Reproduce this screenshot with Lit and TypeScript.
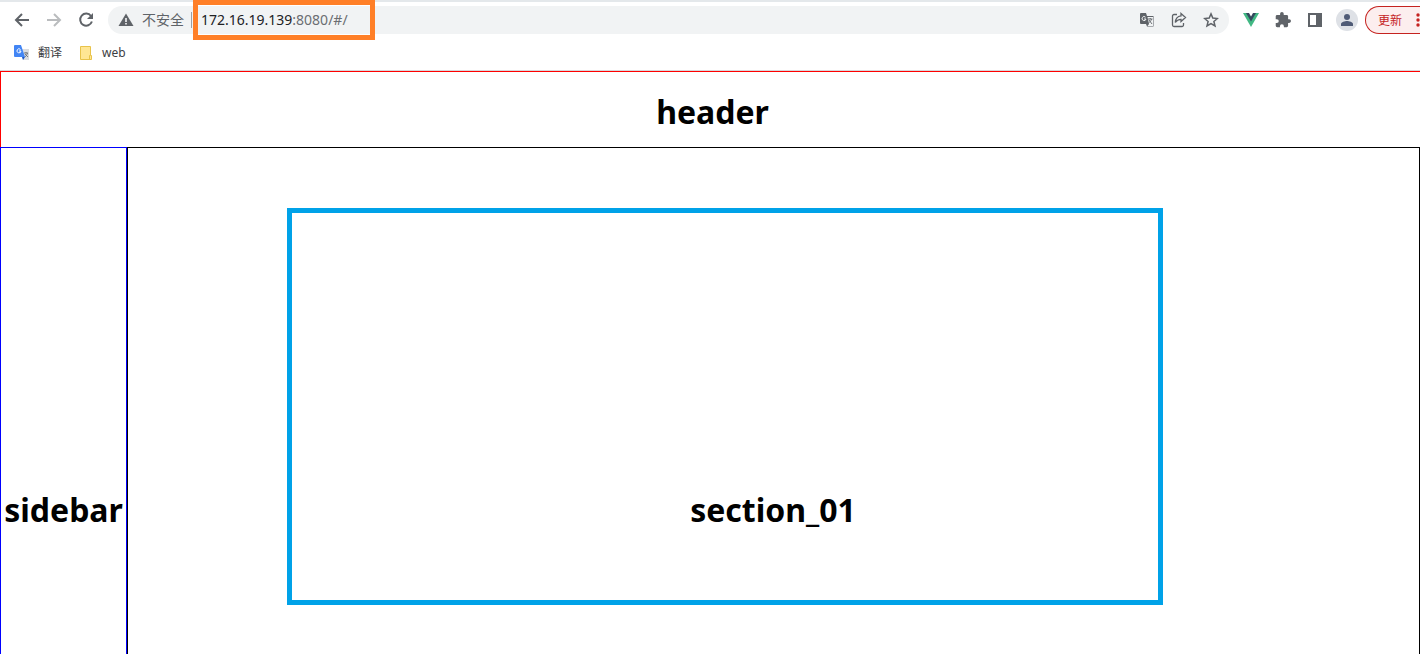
import { LitElement, html, css } from "lit";
import { customElement } from "lit/decorators.js";

@customElement("browser-chrome")
class BrowserChrome extends LitElement {
  static styles = css`
    :host { display: block; height: 70px; border-bottom: 1px solid #d5d8db; background: #fff;
      font-family: "Noto Sans", "Noto Sans CJK SC", sans-serif; color: #3c4043; overflow: hidden; }
    .strip { height: 2px; background: #e4e8eb; }
    .bar { display: flex; align-items: center; height: 36px; }
    button { border: 0; background: none; padding: 0; margin: 0; font: inherit; color: #5f6368; display: grid; place-items: center; flex: none; }
    svg { display: block; }
    .nav { display: flex; gap: 16px; padding: 0 14px; }
    .nav .off { color: #babcbe; }
    .omni { flex: 1; min-width: 0; height: 28px; border-radius: 14px; background: #f1f3f4; display: flex; align-items: center; padding: 0 10px; }
    .unsafe { font-size: 14px; line-height: 20px; display: flex; gap: 8px; align-items: center; }
    .sep { width: 1px; height: 16px; background: #9aa0a6; margin-left: 7px; }
    .url { position: relative; margin-left: 9px; font-family: "Noto Sans", sans-serif; font-size: 14px; line-height: 20px; color: #6b6e72; flex: 1; }
    .url b { font-weight: 400; color: #202124; }
    .mark { position: absolute; left: -8px; top: -10px; width: 182px; height: 40px; box-sizing: border-box; border: 5px solid #ff7f27; }
    .acts { display: flex; gap: 16px; }
    .ext { display: flex; gap: 16px; margin-left: 14px; align-items: center; }
    .me { width: 22px; height: 22px; margin: 0 -3px; border-radius: 50%; background: #dee1e6; color: #4f5b76; }
    .update { display: flex; align-items: center; justify-content: space-between; box-sizing: border-box; width: 55px; height: 28px; margin-left: 10px;
      border: 1px solid #c5221f; border-right: 0; border-radius: 14px 0 0 14px; background: #fceeee; color: #c5221f; padding: 0 0 0 12px; font-size: 12px; }
    .marks { display: flex; gap: 16px; padding: 5px 14px; font-size: 12px; line-height: 20px; }
    .marks a { display: flex; gap: 8px; align-items: center; color: #3c4043; text-decoration: none; }
  `;
  render() {
    return html`
      <div class="strip"></div>
      <div class="bar">
        <div class="nav">
          <button aria-label="Back"><svg width="16" height="16" viewBox="0 0 16 16" fill="none" stroke="currentColor" stroke-width="2"><path d="M15 8H2M8 2 2 8l6 6"/></svg></button>
          <button class="off" aria-label="Forward"><svg width="16" height="16" viewBox="0 0 16 16" fill="none" stroke="currentColor" stroke-width="2"><path d="M1 8h13M8 2l6 6-6 6"/></svg></button>
          <button aria-label="Reload"><svg width="16" height="16" viewBox="0 0 16 16"><path d="M13 4A6 6 0 1 0 13.900 9.500" fill="none" stroke="currentColor" stroke-width="2"/><path d="M15 1v6H9z" fill="currentColor"/></svg></button>
        </div>
        <div class="omni">
          <button class="unsafe"><svg width="16" height="16" viewBox="0 0 16 16"><path d="M8 1.500 15.500 14H.5z" fill="currentColor"/><path d="M8 6v4M8 11v1.600" stroke="#fff" stroke-width="1.500"/></svg>不安全</button>
          <span class="sep"></span>
          <div class="url"><b>172.16.19.139</b>:8080/#/<span class="mark"></span></div>
          <div class="acts">
            <button aria-label="Translate"><svg width="16" height="16" viewBox="0 0 16 16"><path d="M2 1h5l1 3h6.500v10.500H8L7 12H2a1 1 0 0 1-1-1V2a1 1 0 0 1 1-1z" fill="#5f6368"/><path d="M8.500 5H14v9H8.500l1.500-2z" fill="#f1f3f4"/><path d="M6.500 5.200A2 2 0 1 0 7 7H5" fill="none" stroke="#f1f3f4"/><path d="M9 7h4.500M11.200 6v1M12.500 7c-.5 2-1.500 3-3 4M10 8l3 4" stroke="#5f6368" stroke-width=".9" fill="none"/></svg></button>
            <button aria-label="Share"><svg width="16" height="16" viewBox="0 0 16 16" fill="none" stroke="currentColor" stroke-width="1.300"><path d="M6 2.500H3A1.500 1.500 0 0 0 1.500 4v9A1.500 1.500 0 0 0 3 14.500h8a1.500 1.500 0 0 0 1.500-1.500v-2"/><path d="M10 1.500 14.500 5.500 10 9.500V7.300C7 7.300 5.500 8.500 4.300 10.500 4.500 7 6.500 4.200 10 3.800z"/></svg></button>
            <button aria-label="Bookmark"><svg width="16" height="16" viewBox="0 0 16 16"><path d="m8 1.900 1.800 4.200 4.600.4-3.500 3 1.100 4.500L8 11.600 4 14l1.100-4.500-3.500-3 4.600-.4z" fill="none" stroke="currentColor" stroke-width="1.500"/></svg></button>
          </div>
        </div>
        <div class="ext">
          <button aria-label="Vue"><svg width="16" height="16" viewBox="0 0 16 16"><path d="M0 1h16L8 15z" fill="#41b883"/><path d="M3 1h10L8 9.500z" fill="#35495e"/><path d="M6 1h4L8 4.500z" fill="#fff"/></svg></button>
          <button aria-label="Extensions"><svg width="16" height="16" viewBox="1 1 22 22"><path fill="currentColor" d="M20.500 11H19V7a2 2 0 0 0-2-2h-4V3.500a2.500 2.500 0 0 0-5 0V5H4a2 2 0 0 0-2 2v3.800h1.500a2.700 2.700 0 0 1 0 5.400H2V20a2 2 0 0 0 2 2h3.800v-1.500a2.700 2.700 0 0 1 5.400 0V22H17a2 2 0 0 0 2-2v-4h1.500a2.500 2.500 0 0 0 0-5z"/></svg></button>
          <button aria-label="Side panel"><svg width="16" height="16" viewBox="0 0 16 16"><path d="M1 1h14v14H1zM3 3v10h6V3z" fill="currentColor" fill-rule="evenodd"/></svg></button>
          <button class="me" aria-label="Profile"><svg width="16" height="16" viewBox="0 0 16 16"><circle cx="8" cy="5" r="3" fill="currentColor"/><path d="M2 14v-2c0-2 4-3 6-3s6 1 6 3v2z" fill="currentColor"/></svg></button>
        </div>
        <button class="update">更新<svg width="4" height="14" viewBox="0 0 4 14" fill="currentColor"><circle cx="2" cy="2" r="1.700"/><circle cx="2" cy="7" r="1.700"/><circle cx="2" cy="12" r="1.700"/></svg></button>
      </div>
      <nav class="marks">
        <a href="#/"><svg width="16" height="16" viewBox="0 0 16 16"><path d="M6 4h9v11H9z" fill="#dadce0"/><path d="M1 0h6l4 12H1a1 1 0 0 1-1-1V1a1 1 0 0 1 1-1z" fill="#4285f4"/><path d="M8 12h3l-2 3z" fill="#1a56c4"/><path d="M6.500 4.500A2 2 0 1 0 7 6H5" fill="none" stroke="#fff"/><path d="M10 8h4M12 7v1M13.500 8c-.5 2-1.500 3-2.500 4M11 9l3 3" fill="none" stroke="#5f6368" stroke-width=".8"/></svg>翻译</a>
        <a href="#/"><svg width="16" height="16" viewBox="0 0 16 16"><path d="M2.500 1.500h10v9h1v4h-11z" fill="#ffe694" stroke="#e8c34a"/><path d="M11.500 14v-3.500h1" fill="none" stroke="#e8c34a"/></svg>web</a>
      </nav>`;
  }
}

@customElement("app-root")
class AppRoot extends LitElement {
  static styles = css`
    :host { display: flex; flex-direction: column; min-height: 100vh; background: #fff; color: #000; font-family: "Noto Sans", sans-serif; }
    h1 { margin: 0; font-size: 32px; line-height: 48px; font-weight: 700; text-align: center; }
    header { border: 1px solid #f00; border-right: 0; border-bottom: 0; padding: 16px 0 11px 4px; }
    .body { flex: 1; display: flex; }
    aside { box-sizing: border-box; width: 127px; flex: none; border: 1px solid #00f; border-bottom: 0; display: flex; flex-direction: column; justify-content: flex-end; padding-bottom: 120px; }
    main { flex: 1; border: 1px solid #000; border-bottom: 0; padding: 60px 256px 49px 159px; display: flex; }
    section { flex: 1; border: 5px solid #00a2e8; display: flex; flex-direction: column; justify-content: flex-end; padding: 0 0 66px 96px; }
  `;
  render() {
    return html`
      <browser-chrome></browser-chrome>
      <header><h1>header</h1></header>
      <div class="body">
        <aside><h1>sidebar</h1></aside>
        <main><section><h1>section_01</h1></section></main>
      </div>`;
  }
}
